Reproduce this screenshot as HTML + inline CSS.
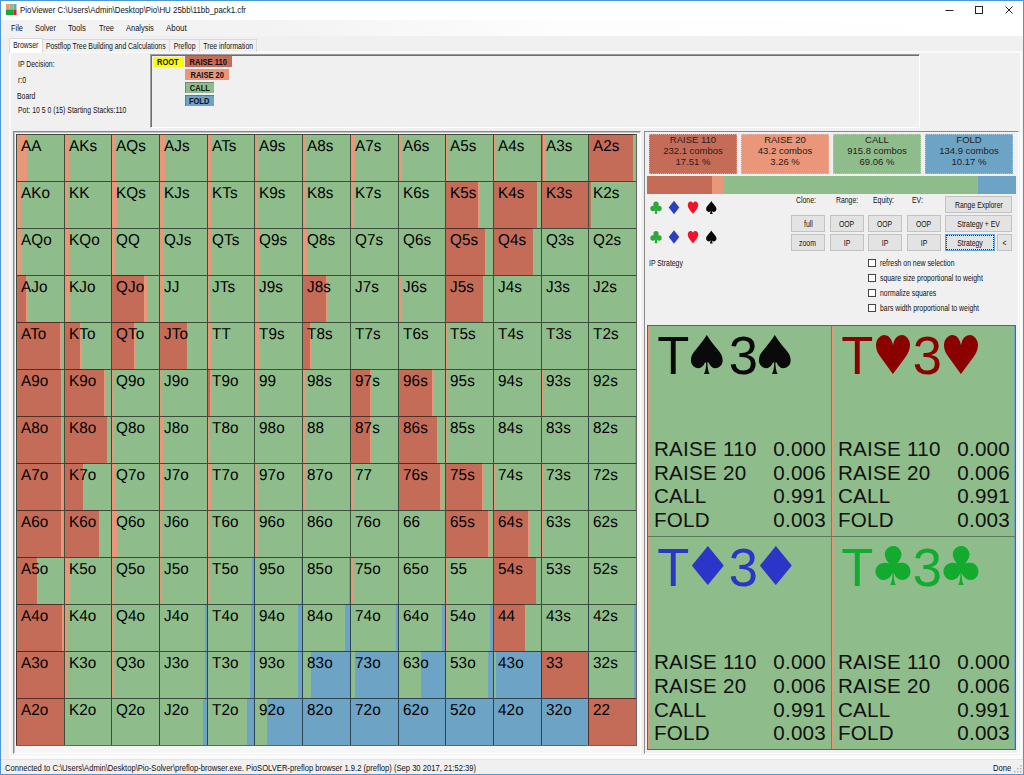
<!DOCTYPE html>
<html lang="en"><head><meta charset="utf-8"><title>PioViewer</title>
<style>
*{box-sizing:border-box;margin:0;padding:0}
html,body{width:1024px;height:775px;overflow:hidden}
body{position:relative;background:#f0f0f0;font-family:"Liberation Sans",sans-serif;font-size:9px;color:#1a1a1a}
.abs,.abs>*{position:absolute}
#frame{left:0;top:0;width:1024px;height:775px;border:1px solid #4a97d9;z-index:50;pointer-events:none}
#title{left:1px;top:1px;width:1022px;height:19px;background:#fff}
#title .t{left:18.5px;top:3px;font-size:8.8px;line-height:12px;white-space:nowrap;color:#111;transform:scaleX(.895);transform-origin:0 50%}
#menu{left:1px;top:20px;width:1022px;height:16px;background:linear-gradient(90deg,#f1f1f1 0,#f3f3f3 25%,#fdfdfd 55%,#fff 100%)}
#menu span{top:2px;line-height:12px;font-size:8.8px;white-space:nowrap;color:#111;transform-origin:0 50%}
.tab{top:39px;height:13px;background:#f0f0f0;border:1px solid #d9d9d9;border-bottom:none;font-size:8.6px;line-height:12px;white-space:nowrap;color:#111;display:flex;justify-content:center}
.n{display:inline-block;white-space:nowrap;transform:scaleX(.8);transform-origin:50% 50%}
.tab.sel{top:38px;height:15px;background:#fff;line-height:13px;z-index:2}
#page{left:9px;top:51px;width:1013px;height:708.5px;border:2px solid #fbfbfb;border-bottom-width:5px;background:#f0f0f0}
.lbl{font-size:8.6px;line-height:11px;white-space:nowrap;color:#111;transform:scaleX(.8);transform-origin:0 50%}
#tree{left:150px;top:54px;width:770px;height:74px;border:1px solid #a0a0a0;border-right-color:#fff;border-bottom-color:#fff;box-shadow:inset 1px 1px 0 #6d6d6d}
.node{height:10.5px;font-weight:bold;font-size:8.2px;line-height:10.5px;padding-top:1.9px;white-space:nowrap;color:#111;display:flex;justify-content:center}
#lp{left:13px;top:130.5px;width:628px;height:623.5px;border:1px solid #8a8a8a;border-right-color:#fff;border-bottom-color:#fff;background:#f6f6f6;box-shadow:inset 1px 1px 0 #c4c4c4}
#grid{left:16px;top:134px;width:621px;height:612px;border-right:1px solid rgba(10,10,10,.62);border-bottom:1px solid rgba(10,10,10,.62)}
.c{position:absolute;background-origin:border-box;height:47px;border-left:1px solid rgba(10,10,10,.62);border-top:1px solid rgba(10,10,10,.62);font-size:15.8px;line-height:16px;padding:2.6px 0 0 3.6px;letter-spacing:.1px;color:#000;white-space:nowrap;overflow:hidden}
#rp{left:644px;top:131px;width:375px;height:623px;border:1px solid #8a8a8a;border-right-color:#fff;border-bottom-color:#fff;background:#f0f0f0}
.act{top:134px;width:88px;height:40px;font-size:9.5px;line-height:10.8px;text-align:center;padding-top:0;color:#2a201c;border:1px dotted rgba(255,255,255,.35)}
.btn{background:#e3e3e3;border:1px solid #c2c2c2;font-size:8.6px;white-space:nowrap;color:#111;display:flex;justify-content:center;align-items:center}
.cb{width:8px;height:8px;border:1px solid #444;background:#fdfdfd}
#sp{left:647px;top:325px;width:369px;height:425px;background:#8fbc8b;border:1px solid #55704f}
.q{width:184px;height:212px;background:#8fbc8b}
.big{left:0;top:3px;width:184px;height:52px}
.big i,.big b{position:absolute;top:0;font-style:normal;font-weight:normal;line-height:52px;white-space:nowrap}
.big i{top:.5px;font-size:52.5px;transform:scaleY(1.025);transform-origin:0 44.2px}
.big b{font-family:"DejaVu Sans","Liberation Sans",sans-serif;font-size:53.5px;transform-origin:50% 50%}
.rows{left:6px;top:111px;width:172px;font-size:20.6px;letter-spacing:.25px;line-height:23.6px;color:#111}
.rows div{position:relative;white-space:nowrap}
.rows div span{position:absolute;right:0;top:0}
#status{left:1px;top:759px;width:1022px;height:15px;background:#f0f0f0;border-top:1px solid #e4e4e4}
#status span{top:1.7px;line-height:12px;font-size:8.8px;white-space:nowrap;color:#111;transform:scaleX(.865);transform-origin:0 50%}
.act span{display:block;transform:translateY(-.5px)}
.c span{display:inline-block;transform:rotate(.03deg) scaleX(.965);transform-origin:0 13.4px}

</style></head><body>
<div class="abs" id="title">
 <svg style="left:5px;top:3px" width="11" height="11" viewBox="0 0 11 11"><rect x="0" y="0" width="3.5" height="5.5" fill="#e9967a"/><rect x="3.5" y="0" width="4" height="5.5" fill="#8fbc8b"/><rect x="7.5" y="0" width="3" height="5.5" fill="#6da3c4"/><rect x="0" y="5.5" width="7.5" height="5.5" fill="#0fab3c"/><rect x="7.5" y="5.5" width="3" height="5.5" fill="#f5102c"/></svg>
 <div class="t">PioViewer C:\Users\Admin\Desktop\Pio\HU 25bb\11bb_pack1.cfr</div>
 <svg style="left:940px;top:0" width="80" height="19" viewBox="0 0 80 19" fill="none" stroke="#222" stroke-width="1"><path d="M4.5 9.5h8"/><rect x="34.5" y="5.5" width="7" height="7"/><path d="M64.5 5.5l7 7m0-7l-7 7"/></svg>
</div>
<div class="abs" id="menu">
 <span style="left:9.5px;transform:scaleX(.84)">File</span><span style="left:33.5px;transform:scaleX(.84)">Solver</span><span style="left:67px;transform:scaleX(.87)">Tools</span><span style="left:98px;transform:scaleX(.84)">Tree</span><span style="left:124.5px;transform:scaleX(.85)">Analysis</span><span style="left:165px;transform:scaleX(.9)">About</span>
</div>
<div class="abs">
 <div id="page"></div>
 <div class="tab sel" style="left:9px;width:34px"><span class="n">Browser</span></div>
 <div class="tab" style="left:42px;width:128px"><span class="n">Postflop Tree Building and Calculations</span></div>
 <div class="tab" style="left:169px;width:31px"><span class="n">Preflop</span></div>
 <div class="tab" style="left:199px;width:58px"><span class="n">Tree information</span></div>
 <div class="lbl" style="left:18px;top:59px">IP Decision:</div>
 <div class="lbl" style="left:17.5px;top:74.5px">r:0</div>
 <div class="lbl" style="left:17px;top:90.5px">Board</div>
 <div class="lbl" style="left:17.5px;top:105px">Pot: 10 5 0 (15) Starting Stacks:110</div>
 <div id="tree"></div>
 <div class="node" style="left:153px;top:56.5px;width:30.5px;background:#ffff00"><span class="n" style="transform:scaleX(.92)">ROOT</span></div>
 <div class="node" style="left:185px;top:56.2px;width:47px;background:#c46c58"><span class="n" style="transform:scaleX(.92)">RAISE 110</span></div>
 <div class="node" style="left:185px;top:69.2px;width:43.5px;background:#e9967a"><span class="n" style="transform:scaleX(.92)">RAISE 20</span></div>
 <div class="node" style="left:185px;top:82.2px;width:29px;background:#8fbc8b;box-shadow:inset 1px 1px 0 rgba(90,90,100,.55)"><span class="n" style="transform:scaleX(.92)">CALL</span></div>
 <div class="node" style="left:185px;top:95.2px;width:29px;background:#6da3c4;box-shadow:inset 1px 1px 0 rgba(90,90,100,.55)"><span class="n" style="transform:scaleX(.92)">FOLD</span></div>
 <div id="lp"></div>
 <div id="grid">
<div class="c" style="left:0px;top:0px;width:48px;background:linear-gradient(90deg,#e9967a 0.0% 21.0%,#8fbc8b 21.0% 100.0%)"><span>AA</span></div>
<div class="c" style="left:48px;top:0px;width:47px;background:linear-gradient(90deg,#e9967a 0.0% 9.0%,#8fbc8b 9.0% 100.0%)"><span>AKs</span></div>
<div class="c" style="left:95px;top:0px;width:48px;background:linear-gradient(90deg,#c46c58 0 1.0%,#e9967a 1.0% 9.5%,#8fbc8b 9.5% 100.0%)"><span>AQs</span></div>
<div class="c" style="left:143px;top:0px;width:48px;background:linear-gradient(90deg,#e9967a 0.0% 11.5%,#8fbc8b 11.5% 100.0%)"><span>AJs</span></div>
<div class="c" style="left:191px;top:0px;width:47px;background:linear-gradient(90deg,#e9967a 0.0% 7.0%,#8fbc8b 7.0% 100.0%)"><span>ATs</span></div>
<div class="c" style="left:238px;top:0px;width:48px;background:linear-gradient(90deg,#e9967a 0.0% 6.5%,#8fbc8b 6.5% 100.0%)"><span>A9s</span></div>
<div class="c" style="left:286px;top:0px;width:48px;background:linear-gradient(90deg,#e9967a 0.0% 7.0%,#8fbc8b 7.0% 100.0%)"><span>A8s</span></div>
<div class="c" style="left:334px;top:0px;width:48px;background:linear-gradient(90deg,#e9967a 0.0% 7.5%,#8fbc8b 7.5% 100.0%)"><span>A7s</span></div>
<div class="c" style="left:382px;top:0px;width:47px;background:linear-gradient(90deg,#e9967a 0.0% 6.0%,#8fbc8b 6.0% 100.0%)"><span>A6s</span></div>
<div class="c" style="left:429px;top:0px;width:48px;background:linear-gradient(90deg,#e9967a 0.0% 4.5%,#8fbc8b 4.5% 100.0%)"><span>A5s</span></div>
<div class="c" style="left:477px;top:0px;width:48px;background:linear-gradient(90deg,#e9967a 0.0% 4.0%,#8fbc8b 4.0% 100.0%)"><span>A4s</span></div>
<div class="c" style="left:525px;top:0px;width:47px;background:linear-gradient(90deg,#c46c58 0 1.5%,#e9967a 1.5% 6.0%,#8fbc8b 6.0% 100.0%)"><span>A3s</span></div>
<div class="c" style="left:572px;top:0px;width:48px;background:linear-gradient(90deg,#c46c58 0 94.0%,#e9967a 94.0% 95.2%,#8fbc8b 95.2% 100.0%)"><span>A2s</span></div>
<div class="c" style="left:0px;top:47px;width:48px;background:linear-gradient(90deg,#e9967a 0.0% 7.5%,#8fbc8b 7.5% 100.0%)"><span>AKo</span></div>
<div class="c" style="left:48px;top:47px;width:47px;background:linear-gradient(90deg,#e9967a 0.0% 7.0%,#8fbc8b 7.0% 100.0%)"><span>KK</span></div>
<div class="c" style="left:95px;top:47px;width:48px;background:linear-gradient(90deg,#e9967a 0.0% 11.5%,#8fbc8b 11.5% 100.0%)"><span>KQs</span></div>
<div class="c" style="left:143px;top:47px;width:48px;background:linear-gradient(90deg,#e9967a 0.0% 9.5%,#8fbc8b 9.5% 100.0%)"><span>KJs</span></div>
<div class="c" style="left:191px;top:47px;width:47px;background:linear-gradient(90deg,#e9967a 0.0% 6.0%,#8fbc8b 6.0% 100.0%)"><span>KTs</span></div>
<div class="c" style="left:238px;top:47px;width:48px;background:linear-gradient(90deg,#e9967a 0.0% 6.0%,#8fbc8b 6.0% 100.0%)"><span>K9s</span></div>
<div class="c" style="left:286px;top:47px;width:48px;background:linear-gradient(90deg,#e9967a 0.0% 6.5%,#8fbc8b 6.5% 100.0%)"><span>K8s</span></div>
<div class="c" style="left:334px;top:47px;width:48px;background:linear-gradient(90deg,#e9967a 0.0% 6.0%,#8fbc8b 6.0% 100.0%)"><span>K7s</span></div>
<div class="c" style="left:382px;top:47px;width:47px;background:linear-gradient(90deg,#e9967a 0.0% 3.0%,#8fbc8b 3.0% 100.0%)"><span>K6s</span></div>
<div class="c" style="left:429px;top:47px;width:48px;background:linear-gradient(90deg,#c46c58 0 69.0%,#e9967a 69.0% 72.0%,#8fbc8b 72.0% 100.0%)"><span>K5s</span></div>
<div class="c" style="left:477px;top:47px;width:48px;background:linear-gradient(90deg,#c46c58 0 92.5%,#e9967a 92.5% 94.5%,#8fbc8b 94.5% 100.0%)"><span>K4s</span></div>
<div class="c" style="left:525px;top:47px;width:47px;background:linear-gradient(90deg,#c46c58 0 99.0%,#e9967a 99.0% 100.0%)"><span>K3s</span></div>
<div class="c" style="left:572px;top:47px;width:48px;background:linear-gradient(90deg,#c46c58 0 4.5%,#e9967a 4.5% 6.5%,#8fbc8b 6.5% 100.0%)"><span>K2s</span></div>
<div class="c" style="left:0px;top:94px;width:48px;background:linear-gradient(90deg,#c46c58 0 1.0%,#e9967a 1.0% 11.5%,#8fbc8b 11.5% 100.0%)"><span>AQo</span></div>
<div class="c" style="left:48px;top:94px;width:47px;background:linear-gradient(90deg,#e9967a 0.0% 8.0%,#8fbc8b 8.0% 100.0%)"><span>KQo</span></div>
<div class="c" style="left:95px;top:94px;width:48px;background:linear-gradient(90deg,#e9967a 0.0% 7.0%,#8fbc8b 7.0% 100.0%)"><span>QQ</span></div>
<div class="c" style="left:143px;top:94px;width:48px;background:linear-gradient(90deg,#e9967a 0.0% 9.0%,#8fbc8b 9.0% 100.0%)"><span>QJs</span></div>
<div class="c" style="left:191px;top:94px;width:47px;background:linear-gradient(90deg,#e9967a 0.0% 8.5%,#8fbc8b 8.5% 100.0%)"><span>QTs</span></div>
<div class="c" style="left:238px;top:94px;width:48px;background:linear-gradient(90deg,#e9967a 0.0% 10.0%,#8fbc8b 10.0% 100.0%)"><span>Q9s</span></div>
<div class="c" style="left:286px;top:94px;width:48px;background:linear-gradient(90deg,#e9967a 0.0% 9.0%,#8fbc8b 9.0% 100.0%)"><span>Q8s</span></div>
<div class="c" style="left:334px;top:94px;width:48px;background:linear-gradient(90deg,#e9967a 0.0% 3.0%,#8fbc8b 3.0% 100.0%)"><span>Q7s</span></div>
<div class="c" style="left:382px;top:94px;width:47px;background:linear-gradient(90deg,#e9967a 0.0% 2.0%,#8fbc8b 2.0% 100.0%)"><span>Q6s</span></div>
<div class="c" style="left:429px;top:94px;width:48px;background:linear-gradient(90deg,#c46c58 0 83.0%,#e9967a 83.0% 84.5%,#8fbc8b 84.5% 100.0%)"><span>Q5s</span></div>
<div class="c" style="left:477px;top:94px;width:48px;background:linear-gradient(90deg,#c46c58 0 84.0%,#e9967a 84.0% 86.0%,#8fbc8b 86.0% 100.0%)"><span>Q4s</span></div>
<div class="c" style="left:525px;top:94px;width:47px;background:linear-gradient(90deg,#e9967a 0.0% 1.0%,#8fbc8b 1.0% 100.0%)"><span>Q3s</span></div>
<div class="c" style="left:572px;top:94px;width:48px;background:#8fbc8b"><span>Q2s</span></div>
<div class="c" style="left:0px;top:141px;width:48px;background:linear-gradient(90deg,#c46c58 0 18.5%,#e9967a 18.5% 23.5%,#8fbc8b 23.5% 100.0%)"><span>AJo</span></div>
<div class="c" style="left:48px;top:141px;width:47px;background:linear-gradient(90deg,#e9967a 0.0% 11.0%,#8fbc8b 11.0% 100.0%)"><span>KJo</span></div>
<div class="c" style="left:95px;top:141px;width:48px;background:linear-gradient(90deg,#c46c58 0 68.5%,#e9967a 68.5% 73.5%,#8fbc8b 73.5% 100.0%)"><span>QJo</span></div>
<div class="c" style="left:143px;top:141px;width:48px;background:linear-gradient(90deg,#e9967a 0.0% 7.5%,#8fbc8b 7.5% 100.0%)"><span>JJ</span></div>
<div class="c" style="left:191px;top:141px;width:47px;background:linear-gradient(90deg,#e9967a 0.0% 5.0%,#8fbc8b 5.0% 100.0%)"><span>JTs</span></div>
<div class="c" style="left:238px;top:141px;width:48px;background:linear-gradient(90deg,#e9967a 0.0% 6.0%,#8fbc8b 6.0% 100.0%)"><span>J9s</span></div>
<div class="c" style="left:286px;top:141px;width:48px;background:linear-gradient(90deg,#c46c58 0 48.5%,#e9967a 48.5% 51.5%,#8fbc8b 51.5% 100.0%)"><span>J8s</span></div>
<div class="c" style="left:334px;top:141px;width:48px;background:linear-gradient(90deg,#e9967a 0.0% 2.5%,#8fbc8b 2.5% 100.0%)"><span>J7s</span></div>
<div class="c" style="left:382px;top:141px;width:47px;background:linear-gradient(90deg,#e9967a 0.0% 4.0%,#8fbc8b 4.0% 100.0%)"><span>J6s</span></div>
<div class="c" style="left:429px;top:141px;width:48px;background:linear-gradient(90deg,#c46c58 0 78.5%,#e9967a 78.5% 81.0%,#8fbc8b 81.0% 100.0%)"><span>J5s</span></div>
<div class="c" style="left:477px;top:141px;width:48px;background:linear-gradient(90deg,#c46c58 0 1.0%,#8fbc8b 1.0% 100.0%)"><span>J4s</span></div>
<div class="c" style="left:525px;top:141px;width:47px;background:#8fbc8b"><span>J3s</span></div>
<div class="c" style="left:572px;top:141px;width:48px;background:#8fbc8b"><span>J2s</span></div>
<div class="c" style="left:0px;top:188px;width:48px;background:linear-gradient(90deg,#c46c58 0 91.0%,#e9967a 91.0% 94.0%,#8fbc8b 94.0% 100.0%)"><span>ATo</span></div>
<div class="c" style="left:48px;top:188px;width:47px;background:linear-gradient(90deg,#c46c58 0 32.5%,#e9967a 32.5% 37.0%,#8fbc8b 37.0% 100.0%)"><span>KTo</span></div>
<div class="c" style="left:95px;top:188px;width:48px;background:linear-gradient(90deg,#c46c58 0 47.5%,#e9967a 47.5% 49.5%,#8fbc8b 49.5% 100.0%)"><span>QTo</span></div>
<div class="c" style="left:143px;top:188px;width:48px;background:linear-gradient(90deg,#c46c58 0 57.0%,#e9967a 57.0% 60.0%,#8fbc8b 60.0% 100.0%)"><span>JTo</span></div>
<div class="c" style="left:191px;top:188px;width:47px;background:linear-gradient(90deg,#e9967a 0.0% 6.5%,#8fbc8b 6.5% 100.0%)"><span>TT</span></div>
<div class="c" style="left:238px;top:188px;width:48px;background:linear-gradient(90deg,#e9967a 0.0% 11.0%,#8fbc8b 11.0% 100.0%)"><span>T9s</span></div>
<div class="c" style="left:286px;top:188px;width:48px;background:linear-gradient(90deg,#c46c58 0 14.0%,#e9967a 14.0% 17.0%,#8fbc8b 17.0% 100.0%)"><span>T8s</span></div>
<div class="c" style="left:334px;top:188px;width:48px;background:#8fbc8b"><span>T7s</span></div>
<div class="c" style="left:382px;top:188px;width:47px;background:linear-gradient(90deg,#e9967a 0.0% 1.0%,#8fbc8b 1.0% 100.0%)"><span>T6s</span></div>
<div class="c" style="left:429px;top:188px;width:48px;background:linear-gradient(90deg,#e9967a 0.0% 2.0%,#8fbc8b 2.0% 100.0%)"><span>T5s</span></div>
<div class="c" style="left:477px;top:188px;width:48px;background:linear-gradient(90deg,#c46c58 0 1.0%,#8fbc8b 1.0% 100.0%)"><span>T4s</span></div>
<div class="c" style="left:525px;top:188px;width:47px;background:#8fbc8b"><span>T3s</span></div>
<div class="c" style="left:572px;top:188px;width:48px;background:#8fbc8b"><span>T2s</span></div>
<div class="c" style="left:0px;top:235px;width:48px;background:linear-gradient(90deg,#c46c58 0 93.0%,#e9967a 93.0% 95.0%,#8fbc8b 95.0% 100.0%)"><span>A9o</span></div>
<div class="c" style="left:48px;top:235px;width:47px;background:linear-gradient(90deg,#c46c58 0 84.0%,#e9967a 84.0% 87.0%,#8fbc8b 87.0% 100.0%)"><span>K9o</span></div>
<div class="c" style="left:95px;top:235px;width:48px;background:linear-gradient(90deg,#e9967a 0.0% 3.0%,#8fbc8b 3.0% 100.0%)"><span>Q9o</span></div>
<div class="c" style="left:143px;top:235px;width:48px;background:linear-gradient(90deg,#e9967a 0.0% 2.0%,#8fbc8b 2.0% 100.0%)"><span>J9o</span></div>
<div class="c" style="left:191px;top:235px;width:47px;background:linear-gradient(90deg,#c46c58 0 5.0%,#e9967a 5.0% 8.0%,#8fbc8b 8.0% 100.0%)"><span>T9o</span></div>
<div class="c" style="left:238px;top:235px;width:48px;background:linear-gradient(90deg,#e9967a 0.0% 6.0%,#8fbc8b 6.0% 100.0%)"><span>99</span></div>
<div class="c" style="left:286px;top:235px;width:48px;background:linear-gradient(90deg,#e9967a 0.0% 5.0%,#8fbc8b 5.0% 100.0%)"><span>98s</span></div>
<div class="c" style="left:334px;top:235px;width:48px;background:linear-gradient(90deg,#c46c58 0 40.0%,#e9967a 40.0% 42.0%,#8fbc8b 42.0% 100.0%)"><span>97s</span></div>
<div class="c" style="left:382px;top:235px;width:47px;background:linear-gradient(90deg,#c46c58 0 72.0%,#e9967a 72.0% 74.0%,#8fbc8b 74.0% 100.0%)"><span>96s</span></div>
<div class="c" style="left:429px;top:235px;width:48px;background:linear-gradient(90deg,#e9967a 0.0% 2.5%,#8fbc8b 2.5% 100.0%)"><span>95s</span></div>
<div class="c" style="left:477px;top:235px;width:48px;background:linear-gradient(90deg,#c46c58 0 1.0%,#8fbc8b 1.0% 100.0%)"><span>94s</span></div>
<div class="c" style="left:525px;top:235px;width:47px;background:linear-gradient(90deg,#e9967a 0.0% 1.5%,#8fbc8b 1.5% 100.0%)"><span>93s</span></div>
<div class="c" style="left:572px;top:235px;width:48px;background:linear-gradient(90deg,#e9967a 0.0% 2.0%,#8fbc8b 2.0% 100.0%)"><span>92s</span></div>
<div class="c" style="left:0px;top:282px;width:48px;background:linear-gradient(90deg,#c46c58 0 94.0%,#e9967a 94.0% 96.0%,#8fbc8b 96.0% 100.0%)"><span>A8o</span></div>
<div class="c" style="left:48px;top:282px;width:47px;background:linear-gradient(90deg,#c46c58 0 91.5%,#e9967a 91.5% 94.5%,#8fbc8b 94.5% 100.0%)"><span>K8o</span></div>
<div class="c" style="left:95px;top:282px;width:48px;background:linear-gradient(90deg,#e9967a 0.0% 4.5%,#8fbc8b 4.5% 100.0%)"><span>Q8o</span></div>
<div class="c" style="left:143px;top:282px;width:48px;background:linear-gradient(90deg,#e9967a 0.0% 6.0%,#8fbc8b 6.0% 100.0%)"><span>J8o</span></div>
<div class="c" style="left:191px;top:282px;width:47px;background:linear-gradient(90deg,#e9967a 0.0% 4.5%,#8fbc8b 4.5% 100.0%)"><span>T8o</span></div>
<div class="c" style="left:238px;top:282px;width:48px;background:linear-gradient(90deg,#e9967a 0.0% 2.5%,#8fbc8b 2.5% 100.0%)"><span>98o</span></div>
<div class="c" style="left:286px;top:282px;width:48px;background:linear-gradient(90deg,#e9967a 0.0% 5.0%,#8fbc8b 5.0% 100.0%)"><span>88</span></div>
<div class="c" style="left:334px;top:282px;width:48px;background:linear-gradient(90deg,#c46c58 0 40.0%,#e9967a 40.0% 43.0%,#8fbc8b 43.0% 100.0%)"><span>87s</span></div>
<div class="c" style="left:382px;top:282px;width:47px;background:linear-gradient(90deg,#c46c58 0 82.5%,#e9967a 82.5% 84.0%,#8fbc8b 84.0% 100.0%)"><span>86s</span></div>
<div class="c" style="left:429px;top:282px;width:48px;background:linear-gradient(90deg,#e9967a 0.0% 2.5%,#8fbc8b 2.5% 100.0%)"><span>85s</span></div>
<div class="c" style="left:477px;top:282px;width:48px;background:linear-gradient(90deg,#c46c58 0 1.0%,#8fbc8b 1.0% 100.0%)"><span>84s</span></div>
<div class="c" style="left:525px;top:282px;width:47px;background:linear-gradient(90deg,#e9967a 0.0% 1.0%,#8fbc8b 1.0% 99.0%,#6da3c4 99.0% 100%)"><span>83s</span></div>
<div class="c" style="left:572px;top:282px;width:48px;background:linear-gradient(90deg,#8fbc8b 0.0% 98.8%,#6da3c4 98.8% 100%)"><span>82s</span></div>
<div class="c" style="left:0px;top:329px;width:48px;background:linear-gradient(90deg,#c46c58 0 94.0%,#e9967a 94.0% 97.0%,#8fbc8b 97.0% 100.0%)"><span>A7o</span></div>
<div class="c" style="left:48px;top:329px;width:47px;background:linear-gradient(90deg,#c46c58 0 40.0%,#e9967a 40.0% 42.0%,#8fbc8b 42.0% 100.0%)"><span>K7o</span></div>
<div class="c" style="left:95px;top:329px;width:48px;background:linear-gradient(90deg,#e9967a 0.0% 9.5%,#8fbc8b 9.5% 100.0%)"><span>Q7o</span></div>
<div class="c" style="left:143px;top:329px;width:48px;background:linear-gradient(90deg,#e9967a 0.0% 6.0%,#8fbc8b 6.0% 100.0%)"><span>J7o</span></div>
<div class="c" style="left:191px;top:329px;width:47px;background:linear-gradient(90deg,#e9967a 0.0% 6.0%,#8fbc8b 6.0% 100.0%)"><span>T7o</span></div>
<div class="c" style="left:238px;top:329px;width:48px;background:linear-gradient(90deg,#e9967a 0.0% 4.0%,#8fbc8b 4.0% 100.0%)"><span>97o</span></div>
<div class="c" style="left:286px;top:329px;width:48px;background:linear-gradient(90deg,#e9967a 0.0% 4.0%,#8fbc8b 4.0% 100.0%)"><span>87o</span></div>
<div class="c" style="left:334px;top:329px;width:48px;background:linear-gradient(90deg,#e9967a 0.0% 4.5%,#8fbc8b 4.5% 100.0%)"><span>77</span></div>
<div class="c" style="left:382px;top:329px;width:47px;background:linear-gradient(90deg,#c46c58 0 90.0%,#e9967a 90.0% 92.0%,#8fbc8b 92.0% 100.0%)"><span>76s</span></div>
<div class="c" style="left:429px;top:329px;width:48px;background:linear-gradient(90deg,#c46c58 0 77.5%,#e9967a 77.5% 79.0%,#8fbc8b 79.0% 100.0%)"><span>75s</span></div>
<div class="c" style="left:477px;top:329px;width:48px;background:linear-gradient(90deg,#e9967a 0.0% 3.5%,#8fbc8b 3.5% 100.0%)"><span>74s</span></div>
<div class="c" style="left:525px;top:329px;width:47px;background:linear-gradient(90deg,#e9967a 0.0% 3.5%,#8fbc8b 3.5% 100.0%)"><span>73s</span></div>
<div class="c" style="left:572px;top:329px;width:48px;background:linear-gradient(90deg,#8fbc8b 0.0% 98.5%,#6da3c4 98.5% 100%)"><span>72s</span></div>
<div class="c" style="left:0px;top:376px;width:48px;background:linear-gradient(90deg,#c46c58 0 94.0%,#e9967a 94.0% 97.0%,#8fbc8b 97.0% 100.0%)"><span>A6o</span></div>
<div class="c" style="left:48px;top:376px;width:47px;background:linear-gradient(90deg,#c46c58 0 74.5%,#e9967a 74.5% 76.0%,#8fbc8b 76.0% 100.0%)"><span>K6o</span></div>
<div class="c" style="left:95px;top:376px;width:48px;background:linear-gradient(90deg,#e9967a 0.0% 10.0%,#8fbc8b 10.0% 100.0%)"><span>Q6o</span></div>
<div class="c" style="left:143px;top:376px;width:48px;background:linear-gradient(90deg,#e9967a 0.0% 5.0%,#8fbc8b 5.0% 100.0%)"><span>J6o</span></div>
<div class="c" style="left:191px;top:376px;width:47px;background:linear-gradient(90deg,#e9967a 0.0% 4.5%,#8fbc8b 4.5% 100.0%)"><span>T6o</span></div>
<div class="c" style="left:238px;top:376px;width:48px;background:linear-gradient(90deg,#e9967a 0.0% 5.0%,#8fbc8b 5.0% 100.0%)"><span>96o</span></div>
<div class="c" style="left:286px;top:376px;width:48px;background:linear-gradient(90deg,#e9967a 0.0% 3.0%,#8fbc8b 3.0% 100.0%)"><span>86o</span></div>
<div class="c" style="left:334px;top:376px;width:48px;background:linear-gradient(90deg,#e9967a 0.0% 2.5%,#8fbc8b 2.5% 100.0%)"><span>76o</span></div>
<div class="c" style="left:382px;top:376px;width:47px;background:linear-gradient(90deg,#e9967a 0.0% 3.0%,#8fbc8b 3.0% 100.0%)"><span>66</span></div>
<div class="c" style="left:429px;top:376px;width:48px;background:linear-gradient(90deg,#c46c58 0 89.0%,#e9967a 89.0% 91.0%,#8fbc8b 91.0% 100.0%)"><span>65s</span></div>
<div class="c" style="left:477px;top:376px;width:48px;background:linear-gradient(90deg,#c46c58 0 72.5%,#e9967a 72.5% 74.0%,#8fbc8b 74.0% 100.0%)"><span>64s</span></div>
<div class="c" style="left:525px;top:376px;width:47px;background:linear-gradient(90deg,#e9967a 0.0% 2.0%,#8fbc8b 2.0% 100.0%)"><span>63s</span></div>
<div class="c" style="left:572px;top:376px;width:48px;background:linear-gradient(90deg,#8fbc8b 0.0% 99.0%,#6da3c4 99.0% 100%)"><span>62s</span></div>
<div class="c" style="left:0px;top:423px;width:48px;background:linear-gradient(90deg,#c46c58 0 42.5%,#e9967a 42.5% 44.0%,#8fbc8b 44.0% 100.0%)"><span>A5o</span></div>
<div class="c" style="left:48px;top:423px;width:47px;background:linear-gradient(90deg,#e9967a 0.0% 10.5%,#8fbc8b 10.5% 100.0%)"><span>K5o</span></div>
<div class="c" style="left:95px;top:423px;width:48px;background:linear-gradient(90deg,#e9967a 0.0% 1.5%,#8fbc8b 1.5% 100.0%)"><span>Q5o</span></div>
<div class="c" style="left:143px;top:423px;width:48px;background:linear-gradient(90deg,#e9967a 0.0% 3.0%,#8fbc8b 3.0% 100.0%)"><span>J5o</span></div>
<div class="c" style="left:191px;top:423px;width:47px;background:linear-gradient(90deg,#e9967a 0.0% 2.0%,#8fbc8b 2.0% 96.5%,#6da3c4 96.5% 100%)"><span>T5o</span></div>
<div class="c" style="left:238px;top:423px;width:48px;background:linear-gradient(90deg,#e9967a 0.0% 3.0%,#8fbc8b 3.0% 97.0%,#6da3c4 97.0% 100%)"><span>95o</span></div>
<div class="c" style="left:286px;top:423px;width:48px;background:linear-gradient(90deg,#e9967a 0.0% 3.0%,#8fbc8b 3.0% 98.0%,#6da3c4 98.0% 100%)"><span>85o</span></div>
<div class="c" style="left:334px;top:423px;width:48px;background:linear-gradient(90deg,#e9967a 0.0% 3.5%,#8fbc8b 3.5% 99.0%,#6da3c4 99.0% 100%)"><span>75o</span></div>
<div class="c" style="left:382px;top:423px;width:47px;background:linear-gradient(90deg,#e9967a 0.0% 3.0%,#8fbc8b 3.0% 99.0%,#6da3c4 99.0% 100%)"><span>65o</span></div>
<div class="c" style="left:429px;top:423px;width:48px;background:linear-gradient(90deg,#e9967a 0.0% 1.5%,#8fbc8b 1.5% 100.0%)"><span>55</span></div>
<div class="c" style="left:477px;top:423px;width:48px;background:linear-gradient(90deg,#c46c58 0 88.5%,#e9967a 88.5% 90.0%,#8fbc8b 90.0% 100.0%)"><span>54s</span></div>
<div class="c" style="left:525px;top:423px;width:47px;background:#8fbc8b"><span>53s</span></div>
<div class="c" style="left:572px;top:423px;width:48px;background:linear-gradient(90deg,#8fbc8b 0.0% 99.0%,#6da3c4 99.0% 100%)"><span>52s</span></div>
<div class="c" style="left:0px;top:470px;width:48px;background:linear-gradient(90deg,#c46c58 0 95.0%,#e9967a 95.0% 97.0%,#8fbc8b 97.0% 100.0%)"><span>A4o</span></div>
<div class="c" style="left:48px;top:470px;width:47px;background:linear-gradient(90deg,#e9967a 0.0% 4.0%,#8fbc8b 4.0% 100.0%)"><span>K4o</span></div>
<div class="c" style="left:95px;top:470px;width:48px;background:linear-gradient(90deg,#e9967a 0.0% 1.5%,#8fbc8b 1.5% 100.0%)"><span>Q4o</span></div>
<div class="c" style="left:143px;top:470px;width:48px;background:linear-gradient(90deg,#e9967a 0.0% 1.0%,#8fbc8b 1.0% 95.5%,#6da3c4 95.5% 100%)"><span>J4o</span></div>
<div class="c" style="left:191px;top:470px;width:47px;background:linear-gradient(90deg,#8fbc8b 0.0% 94.0%,#6da3c4 94.0% 100%)"><span>T4o</span></div>
<div class="c" style="left:238px;top:470px;width:48px;background:linear-gradient(90deg,#8fbc8b 0.0% 91.0%,#6da3c4 91.0% 100%)"><span>94o</span></div>
<div class="c" style="left:286px;top:470px;width:48px;background:linear-gradient(90deg,#8fbc8b 0.0% 90.0%,#6da3c4 90.0% 100%)"><span>84o</span></div>
<div class="c" style="left:334px;top:470px;width:48px;background:linear-gradient(90deg,#e9967a 0.0% 2.5%,#8fbc8b 2.5% 95.0%,#6da3c4 95.0% 100%)"><span>74o</span></div>
<div class="c" style="left:382px;top:470px;width:47px;background:linear-gradient(90deg,#e9967a 0.0% 2.5%,#8fbc8b 2.5% 94.0%,#6da3c4 94.0% 100%)"><span>64o</span></div>
<div class="c" style="left:429px;top:470px;width:48px;background:linear-gradient(90deg,#e9967a 0.0% 2.0%,#8fbc8b 2.0% 94.5%,#6da3c4 94.5% 100%)"><span>54o</span></div>
<div class="c" style="left:477px;top:470px;width:48px;background:linear-gradient(90deg,#c46c58 0 66.0%,#e9967a 66.0% 67.5%,#8fbc8b 67.5% 100.0%)"><span>44</span></div>
<div class="c" style="left:525px;top:470px;width:47px;background:#8fbc8b"><span>43s</span></div>
<div class="c" style="left:572px;top:470px;width:48px;background:linear-gradient(90deg,#8fbc8b 0.0% 96.5%,#6da3c4 96.5% 100%)"><span>42s</span></div>
<div class="c" style="left:0px;top:517px;width:48px;background:#c46c58"><span>A3o</span></div>
<div class="c" style="left:48px;top:517px;width:47px;background:linear-gradient(90deg,#e9967a 0.0% 4.0%,#8fbc8b 4.0% 100.0%)"><span>K3o</span></div>
<div class="c" style="left:95px;top:517px;width:48px;background:linear-gradient(90deg,#e9967a 0.0% 1.5%,#8fbc8b 1.5% 100.0%)"><span>Q3o</span></div>
<div class="c" style="left:143px;top:517px;width:48px;background:linear-gradient(90deg,#8fbc8b 0.0% 95.5%,#6da3c4 95.5% 100%)"><span>J3o</span></div>
<div class="c" style="left:191px;top:517px;width:47px;background:linear-gradient(90deg,#8fbc8b 0.0% 92.0%,#6da3c4 92.0% 100%)"><span>T3o</span></div>
<div class="c" style="left:238px;top:517px;width:48px;background:linear-gradient(90deg,#8fbc8b 0.0% 90.5%,#6da3c4 90.5% 100%)"><span>93o</span></div>
<div class="c" style="left:286px;top:517px;width:48px;background:linear-gradient(90deg,#8fbc8b 0.0% 17.0%,#6da3c4 17.0% 100%)"><span>83o</span></div>
<div class="c" style="left:334px;top:517px;width:48px;background:linear-gradient(90deg,#8fbc8b 0.0% 9.0%,#6da3c4 9.0% 100%)"><span>73o</span></div>
<div class="c" style="left:382px;top:517px;width:47px;background:linear-gradient(90deg,#8fbc8b 0.0% 48.5%,#6da3c4 48.5% 100%)"><span>63o</span></div>
<div class="c" style="left:429px;top:517px;width:48px;background:linear-gradient(90deg,#8fbc8b 0.0% 89.0%,#6da3c4 89.0% 100%)"><span>53o</span></div>
<div class="c" style="left:477px;top:517px;width:48px;background:linear-gradient(90deg,#8fbc8b 0.0% 5.0%,#6da3c4 5.0% 100%)"><span>43o</span></div>
<div class="c" style="left:525px;top:517px;width:47px;background:#c46c58"><span>33</span></div>
<div class="c" style="left:572px;top:517px;width:48px;background:linear-gradient(90deg,#8fbc8b 0.0% 95.5%,#6da3c4 95.5% 100%)"><span>32s</span></div>
<div class="c" style="left:0px;top:564px;width:48px;background:#c46c58"><span>A2o</span></div>
<div class="c" style="left:48px;top:564px;width:47px;background:linear-gradient(90deg,#e9967a 0.0% 1.5%,#8fbc8b 1.5% 100.0%)"><span>K2o</span></div>
<div class="c" style="left:95px;top:564px;width:48px;background:linear-gradient(90deg,#e9967a 0.0% 1.0%,#8fbc8b 1.0% 100.0%)"><span>Q2o</span></div>
<div class="c" style="left:143px;top:564px;width:48px;background:linear-gradient(90deg,#8fbc8b 0.0% 91.0%,#6da3c4 91.0% 100%)"><span>J2o</span></div>
<div class="c" style="left:191px;top:564px;width:47px;background:linear-gradient(90deg,#8fbc8b 0.0% 85.0%,#6da3c4 85.0% 100%)"><span>T2o</span></div>
<div class="c" style="left:238px;top:564px;width:48px;background:linear-gradient(90deg,#8fbc8b 0.0% 26.0%,#6da3c4 26.0% 100%)"><span>92o</span></div>
<div class="c" style="left:286px;top:564px;width:48px;background:#6da3c4"><span>82o</span></div>
<div class="c" style="left:334px;top:564px;width:48px;background:#6da3c4"><span>72o</span></div>
<div class="c" style="left:382px;top:564px;width:47px;background:#6da3c4"><span>62o</span></div>
<div class="c" style="left:429px;top:564px;width:48px;background:#6da3c4"><span>52o</span></div>
<div class="c" style="left:477px;top:564px;width:48px;background:#6da3c4"><span>42o</span></div>
<div class="c" style="left:525px;top:564px;width:47px;background:#6da3c4"><span>32o</span></div>
<div class="c" style="left:572px;top:564px;width:48px;background:#c46c58"><span>22</span></div>
 </div>
 <div id="rp"></div>
 <div class="act" style="left:649px;background:#c46c58"><span>RAISE 110<br>232.1 combos<br>17.51 %</span></div>
 <div class="act" style="left:741px;background:#e9967a"><span>RAISE 20<br>43.2 combos<br>3.26 %</span></div>
 <div class="act" style="left:833px;background:#8fbc8b"><span>CALL<br>915.8 combos<br>69.06 %</span></div>
 <div class="act" style="left:925px;background:#6da3c4"><span>FOLD<br>134.9 combos<br>10.17 %</span></div>
 <div style="left:647px;top:176px;width:368.5px;height:17.5px;background:linear-gradient(90deg,#c46c58 0 17.51%,#e9967a 17.51% 20.77%,#8fbc8b 20.77% 89.83%,#6da3c4 89.83% 100%)"></div>
 <svg style="left:649px;top:200px" width="70" height="45" viewBox="0 0 70 45">
  <g transform="translate(7 7.5)" fill="#2ba83a"><circle cx="0" cy="-3.3" r="2.65"/><circle cx="-3" cy="1" r="2.65"/><circle cx="3" cy="1" r="2.65"/><circle cx="0" cy="-0.5" r="1.6"/><path d="M-0.55 0h1.1l0.8 6.3h-2.7z"/></g>
  <path transform="translate(25 7.5)" fill="#2b3fc4" d="M0-6.8L5.3 0 0 6.8-5.3 0z"/>
  <path transform="translate(44 7.5)" fill="#f5102c" d="M0 6.4C-2.2 3.4-5.2 0.9-5.2-2.5-5.2-4.6-3.9-6-2.4-6-1.3-6-0.45-5.3 0-4.3 0.45-5.3 1.3-6 2.4-6 3.9-6 5.2-4.6 5.2-2.5 5.2 0.9 2.2 3.4 0 6.4z"/>
  <path transform="translate(62.3 7.5)" fill="#0a0a0a" d="M0-6.5C2-3.3 5.15-1.2 5.15 1.6 5.15 3.3 4 4.4 2.7 4.4 1.7 4.4 0.95 4 0.45 3.2L1.4 6.5H-1.4L-0.45 3.2C-0.95 4-1.7 4.4-2.7 4.4-4 4.4-5.15 3.3-5.15 1.6-5.15-1.2-2-3.3 0-6.5z"/>
  <g transform="translate(7 37)" fill="#2ba83a"><circle cx="0" cy="-3.3" r="2.65"/><circle cx="-3" cy="1" r="2.65"/><circle cx="3" cy="1" r="2.65"/><circle cx="0" cy="-0.5" r="1.6"/><path d="M-0.55 0h1.1l0.8 6.3h-2.7z"/></g>
  <path transform="translate(25 37)" fill="#2b3fc4" d="M0-6.8L5.3 0 0 6.8-5.3 0z"/>
  <path transform="translate(44 37)" fill="#f5102c" d="M0 6.4C-2.2 3.4-5.2 0.9-5.2-2.5-5.2-4.6-3.9-6-2.4-6-1.3-6-0.45-5.3 0-4.3 0.45-5.3 1.3-6 2.4-6 3.9-6 5.2-4.6 5.2-2.5 5.2 0.9 2.2 3.4 0 6.4z"/>
  <path transform="translate(62.3 37)" fill="#0a0a0a" d="M0-6.5C2-3.3 5.15-1.2 5.15 1.6 5.15 3.3 4 4.4 2.7 4.4 1.7 4.4 0.95 4 0.45 3.2L1.4 6.5H-1.4L-0.45 3.2C-0.95 4-1.7 4.4-2.7 4.4-4 4.4-5.15 3.3-5.15 1.6-5.15-1.2-2-3.3 0-6.5z"/>
 </svg>
 <div class="lbl" style="left:796px;top:195px">Clone:</div>
 <div class="lbl" style="left:836px;top:195px">Range:</div>
 <div class="lbl" style="left:873px;top:195px">Equity:</div>
 <div class="lbl" style="left:911.5px;top:195px">EV:</div>
 <div class="btn" style="left:791px;top:215px;width:34px;height:17px"><span class="n">full</span></div>
 <div class="btn" style="left:791px;top:234px;width:34px;height:17px"><span class="n">zoom</span></div>
 <div class="btn" style="left:830px;top:215px;width:34px;height:17px"><span class="n">OOP</span></div>
 <div class="btn" style="left:830px;top:234px;width:34px;height:17px"><span class="n">IP</span></div>
 <div class="btn" style="left:868px;top:215px;width:34px;height:17px"><span class="n">OOP</span></div>
 <div class="btn" style="left:868px;top:234px;width:34px;height:17px"><span class="n">IP</span></div>
 <div class="btn" style="left:907px;top:215px;width:34px;height:17px"><span class="n">OOP</span></div>
 <div class="btn" style="left:907px;top:234px;width:34px;height:17px"><span class="n">IP</span></div>
 <div class="btn" style="left:945px;top:196px;width:67px;height:17px"><span class="n">Range Explorer</span></div>
 <div class="btn" style="left:945px;top:215px;width:67px;height:17px"><span class="n">Strategy + EV</span></div>
 <div class="btn" style="left:945px;top:234px;width:50px;height:17px;border:1px solid #58a6e6;outline:1px dotted #1a22cc;outline-offset:-2px"><span class="n">Strategy</span></div>
 <div class="btn" style="left:997px;top:234px;width:15px;height:17px"><span class="n">&lt;</span></div>
 <div class="lbl" style="left:649px;top:257.5px">IP Strategy</div>
 <div class="cb" style="left:868px;top:259px"></div><div class="lbl" style="left:879.7px;top:257.5px">refresh on new selection</div>
 <div class="cb" style="left:868px;top:274px"></div><div class="lbl" style="left:879.7px;top:272.5px">square size proportional to weight</div>
 <div class="cb" style="left:868px;top:289px"></div><div class="lbl" style="left:879.7px;top:287.5px">normalize squares</div>
 <div class="cb" style="left:868px;top:304px"></div><div class="lbl" style="left:879.7px;top:302.5px">bars width proportional to weight</div>
 <div id="sp"></div>
<div class="q abs" style="left:648px;top:326px;width:184px;height:211px;background:linear-gradient(90deg,#e9967a 0 1px,#8fbc8b 1px 183px,#6da3c4 183px)"><div class="big" style="color:#0a0a0a;top:3.6px"><i style="left:9.2px">T</i><b style="left:35.37px;transform:scaleX(1.02)">♠</b><i style="left:80.8px">3</i><b style="left:103.32px;transform:scaleX(1.02)">♠</b></div><div class="rows" style="top:111px"><div>RAISE 110<span>0.000</span></div><div>RAISE 20<span>0.006</span></div><div>CALL<span>0.991</span></div><div>FOLD<span>0.003</span></div></div></div>
<div class="q abs" style="left:832px;top:326px;width:183px;height:211px;background:linear-gradient(90deg,#e9967a 0 1px,#8fbc8b 1px 182px,#6da3c4 182px)"><div class="big" style="color:#8b0000;top:3.6px"><i style="left:9.2px">T</i><b style="left:36.67px;transform:scaleX(0.885)">♥</b><i style="left:80.8px">3</i><b style="left:105.42px;transform:scaleX(0.885)">♥</b></div><div class="rows" style="top:111px"><div>RAISE 110<span>0.000</span></div><div>RAISE 20<span>0.006</span></div><div>CALL<span>0.991</span></div><div>FOLD<span>0.003</span></div></div></div>
<div class="q abs" style="left:648px;top:537px;width:184px;height:212px;background:linear-gradient(90deg,#e9967a 0 1px,#8fbc8b 1px 183px,#6da3c4 183px)"><div class="big" style="color:#2b35c8;top:4.3px"><i style="left:9.2px">T</i><b style="left:35.77px;transform:scaleX(1.058)">♦</b><i style="left:80.8px">3</i><b style="left:103.82px;transform:scaleX(1.058)">♦</b></div><div class="rows" style="top:113.4px"><div>RAISE 110<span>0.000</span></div><div>RAISE 20<span>0.006</span></div><div>CALL<span>0.991</span></div><div>FOLD<span>0.003</span></div></div></div>
<div class="q abs" style="left:832px;top:537px;width:183px;height:212px;background:linear-gradient(90deg,#e9967a 0 1px,#8fbc8b 1px 182px,#6da3c4 182px)"><div class="big" style="color:#12ab2d;top:4.3px"><i style="left:9.2px">T</i><b style="left:36.67px;transform:scaleX(0.976)">♣</b><i style="left:80.8px">3</i><b style="left:105.42px;transform:scaleX(0.976)">♣</b></div><div class="rows" style="top:113.4px"><div>RAISE 110<span>0.000</span></div><div>RAISE 20<span>0.006</span></div><div>CALL<span>0.991</span></div><div>FOLD<span>0.003</span></div></div></div>
 <div style="left:831px;top:326px;width:1px;height:423px;background:#6f7f8f"></div>
 <div style="left:648px;top:536px;width:367px;height:1px;background:#5d7a5a"></div>
</div>
<div class="abs" id="status"><span style="left:4px">Connected to C:\Users\Admin\Desktop\Pio-Solver\preflop-browser.exe. PioSOLVER-preflop browser 1.9.2 (preflop) (Sep 30 2017, 21:52:39)</span><span style="left:992px">Done</span><svg style="left:1013px;top:5px" width="8" height="8" viewBox="0 0 8 8" fill="#b5b5b5"><rect x="6" y="0" width="1.5" height="1.5"/><rect x="3" y="3" width="1.5" height="1.5"/><rect x="6" y="3" width="1.5" height="1.5"/><rect x="0" y="6" width="1.5" height="1.5"/><rect x="3" y="6" width="1.5" height="1.5"/><rect x="6" y="6" width="1.5" height="1.5"/></svg></div>
<div class="abs" id="frame"></div>

</body></html>
